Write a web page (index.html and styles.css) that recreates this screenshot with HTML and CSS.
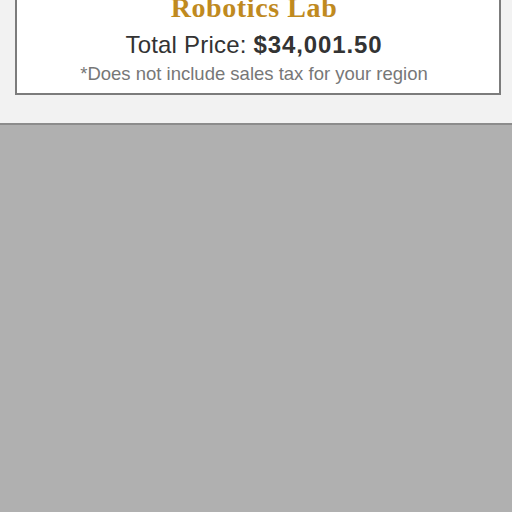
FILE: index.html
```html
<!DOCTYPE html>
<html>
<head>
<meta charset="utf-8">
<link rel="stylesheet" href="styles.css">
</head>
<body>
<div class="top">
  <div class="card">
    <div class="title">Robotics Lab</div>
    <div class="price">Total Price: <b class="amount">$34,001.50</b></div>
    <div class="note">*Does not include sales tax for your region</div>
  </div>
</div>
<div class="bottom"></div>
</body>
</html>
```
FILE: styles.css
```css
html, body {
  margin: 0;
  padding: 0;
  height: 100%;
}
body {
  background: #b0b0b0;
  display: flex;
  flex-direction: column;
  overflow: hidden;
}
.top {
  background: #f2f2f2;
  height: 123px;
  flex: none;
}
.card {
  margin-top: -11px;
  margin-left: 15px;
  width: 486px;
  height: 106px;
  background: #ffffff;
  border: 2px solid #7c7c7c;
  border-top: none;
  padding: 0 8px 0 0;
  box-sizing: border-box;
  text-align: center;
}
.title {
  font-family: "Liberation Serif", serif;
  font-weight: bold;
  font-size: 28px;
  line-height: 32px;
  letter-spacing: 0.6px;
  color: #c08a1f;
  padding-top: 3px;
}
.price {
  font-family: "Liberation Sans", Arial, sans-serif;
  font-size: 24px;
  line-height: 28px;
  color: #333333;
  margin-top: 7px;
  letter-spacing: 0.2px;
}
.amount {
  font-weight: bold;
  letter-spacing: 0.9px;
}
.note {
  font-family: "Liberation Sans", Arial, sans-serif;
  font-size: 18.5px;
  line-height: 22px;
  color: #777777;
  margin-top: 4px;
}
.bottom {
  flex: 1;
  border-top: 2px solid #8c8c8c;
  background: #b0b0b0;
}
```
